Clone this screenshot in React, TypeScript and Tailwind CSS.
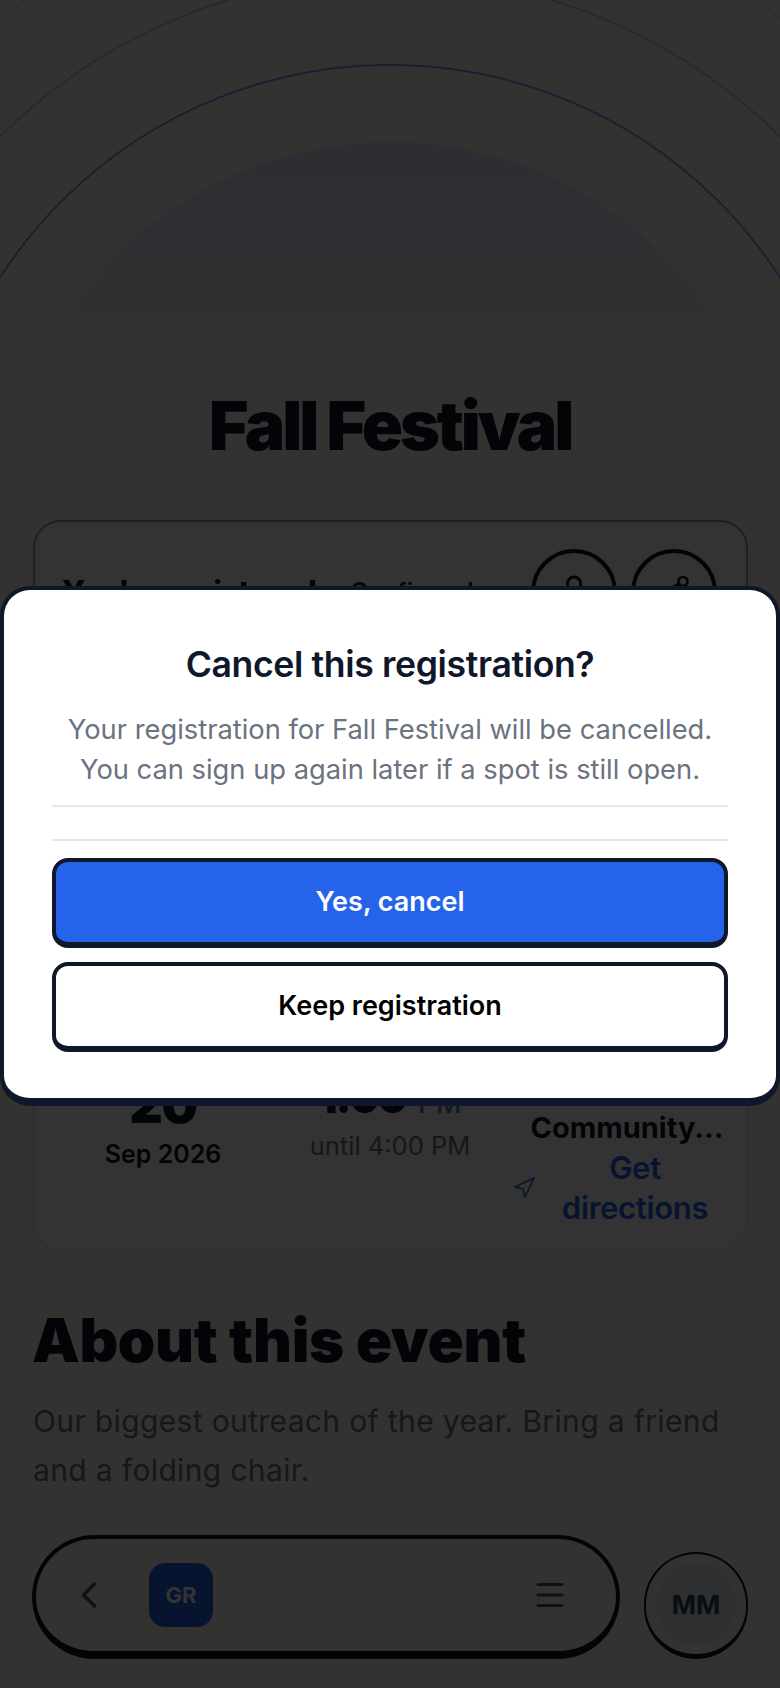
import { ChevronLeft, Menu, Navigation, Share2, User } from 'lucide-react';

const sans = "font-['Inter',sans-serif]";

export default function App() {
  return (
    <div className={`relative h-[1688px] w-[780px] overflow-hidden bg-[#fcfaf6] ${sans}`}>
      {/* Hero */}
      <div className="relative h-[520px]">
        <div className="absolute left-[-254px] top-[-114px] h-[1288px] w-[1288px] rounded-full border-2 border-[#2563eb]/15" />
        <div className="absolute left-[-165px] top-[-25px] h-[1110px] w-[1110px] rounded-full border-2 border-[#2563eb]/30" />
        <div className="absolute left-[-75px] top-[64px] h-[930px] w-[930px] rounded-full border-2 border-[#2563eb]/60" />
        <div className="absolute left-[2px] top-[142px] h-[776px] w-[776px] rounded-full bg-linear-to-b from-[#dbe4fb] to-transparent to-[36%]" />
        <div className="relative flex justify-center pt-[380px]">
          <h1 className="text-[68px] font-black leading-[90px] tracking-[-0.046em] text-[#0f172a]">Fall Festival</h1>
        </div>
      </div>

      <div className="relative pl-[33px] pr-[32px]">
        {/* Registered card */}
        <div className="flex h-[240px] items-start justify-between rounded-[28px] border-2 border-[#96a57a] bg-white pl-[27px] pr-[29px] pt-[28px]">
          <div className="flex items-center gap-[34px] pt-[22px]">
            <span className="text-[31px] font-extrabold leading-[40px] tracking-[-0.02em] text-[#0f172a]">You're registered</span>
            <span className="text-[24px] font-semibold text-[#0f172a]">Confirmed</span>
          </div>
          <div className="-mt-px flex gap-[14px]">
            <button className="flex h-[86px] w-[86px] items-center justify-center rounded-full border-4 border-[#0f172a] text-[#0f172a]">
              <User size={40} strokeWidth={1.8} />
            </button>
            <button className="flex h-[86px] w-[86px] items-center justify-center rounded-full border-4 border-[#0f172a] text-[#0f172a]">
              <Share2 size={36} strokeWidth={1.8} />
            </button>
          </div>
        </div>

        {/* Details card */}
        <div className="mt-4 flex h-[476px] flex-col justify-end rounded-[28px] border-2 border-[#e2e8f0] bg-white pb-[22px] pl-[27px]">
          <div className="grid grid-cols-[202px_202px_222px] items-start gap-x-[25px]">
            <div className="flex flex-col items-center">
              <span className="text-[52px] font-black leading-[78px] tracking-[-0.03em] text-[#0f172a]">20</span>
              <span className="-mt-[6px] text-[25px] font-semibold leading-[32px] text-[#0f172a]">Sep 2026</span>
            </div>
            <div className="flex flex-col items-center">
              <div className="-mt-[2px] flex items-baseline gap-[12px]">
                <span className="text-[42px] font-black leading-[68px] tracking-[-0.04em] text-[#0f172a]">1:00</span>
                <span className="text-[28px] font-medium text-[#64748b]">PM</span>
              </div>
              <span className="-mt-[2px] text-[25.5px] leading-[32px] text-[#64748b]">until 4:00 PM</span>
            </div>
            <div className="flex flex-col items-center pt-[42px]">
              <span className="text-[29px] font-bold leading-[40px] text-[#0f172a]">Community...</span>
              <a className="flex items-center gap-[19px] text-[#2563eb]">
                <Navigation size={24} strokeWidth={1.6} className="-ml-[27px]" />
                <span className="w-[160px] text-center text-[31px] font-semibold leading-[40px] tracking-[-0.01em]">Get directions</span>
              </a>
            </div>
          </div>
        </div>

        {/* About */}
        <h2 className="-ml-px mt-[48px] text-[60px] font-black leading-[80px] tracking-[-0.005em] text-[#0f172a]">About this event</h2>
        <p className="mt-[17px] text-[30px] leading-[49px] tracking-[0.012em] text-[#64748b]">
          Our biggest outreach of the year. Bring a friend and a folding chair.
        </p>

        {/* Bottom nav */}
        <div className="-ml-px mt-[40px] flex items-end gap-6">
          <div className="flex h-[124px] w-[588px] items-center rounded-full border-4 border-b-8 border-[#0f172a] pl-[31px] pr-[48px]">
            <ChevronLeft size={44} strokeWidth={1.9} className="shrink-0 text-[#475569]" />
            <div className="ml-[38px] flex h-16 w-16 items-center justify-center rounded-2xl bg-[#2563eb] text-[22px] font-bold text-white">GR</div>
            <Menu size={36} strokeWidth={2} className="ml-auto text-[#475569]" />
          </div>
          <div className="flex h-[107px] w-[104px] items-center justify-center rounded-full border-2 border-b-[5px] border-[#0f172a]">
            <div className="flex h-20 w-20 items-center justify-center rounded-full bg-[#e2e8f0] text-[26px] font-bold text-[#334155]">MM</div>
          </div>
        </div>
      </div>

      {/* Confirm dialog */}
      <div className="absolute inset-0 flex items-center justify-center bg-black/80 pt-1">
        <div className="w-full rounded-[30px] border-4 border-b-8 border-[#0f172a] bg-white px-12 pb-[46px] pt-[52px]">
          <h3 className="text-center text-[35.6px] font-semibold leading-[46px] tracking-[-0.01em] text-[#0f172a]">Cancel this registration?</h3>
          <p className="mt-[22px] text-center text-[27.3px] leading-[40px] text-[#6b7280]">
            Your registration for Fall Festival will be cancelled.
            <br />
            You can sign up again later if a spot is still open.
          </p>
          <div className="mt-[15px] h-[36px] border-y-2 border-[#e2e8f0]" />
          <div className="mt-[17px] flex flex-col gap-[14px]">
            <button className="h-[90px] rounded-2xl border-4 border-b-[6px] border-[#0f172a] bg-[#2563eb] text-[27px] font-semibold text-white">Yes, cancel</button>
            <button className="h-[90px] rounded-2xl border-4 border-b-[6px] border-[#0f172a] bg-white text-[27px] font-semibold text-black">Keep registration</button>
          </div>
        </div>
      </div>
    </div>
  );
}
